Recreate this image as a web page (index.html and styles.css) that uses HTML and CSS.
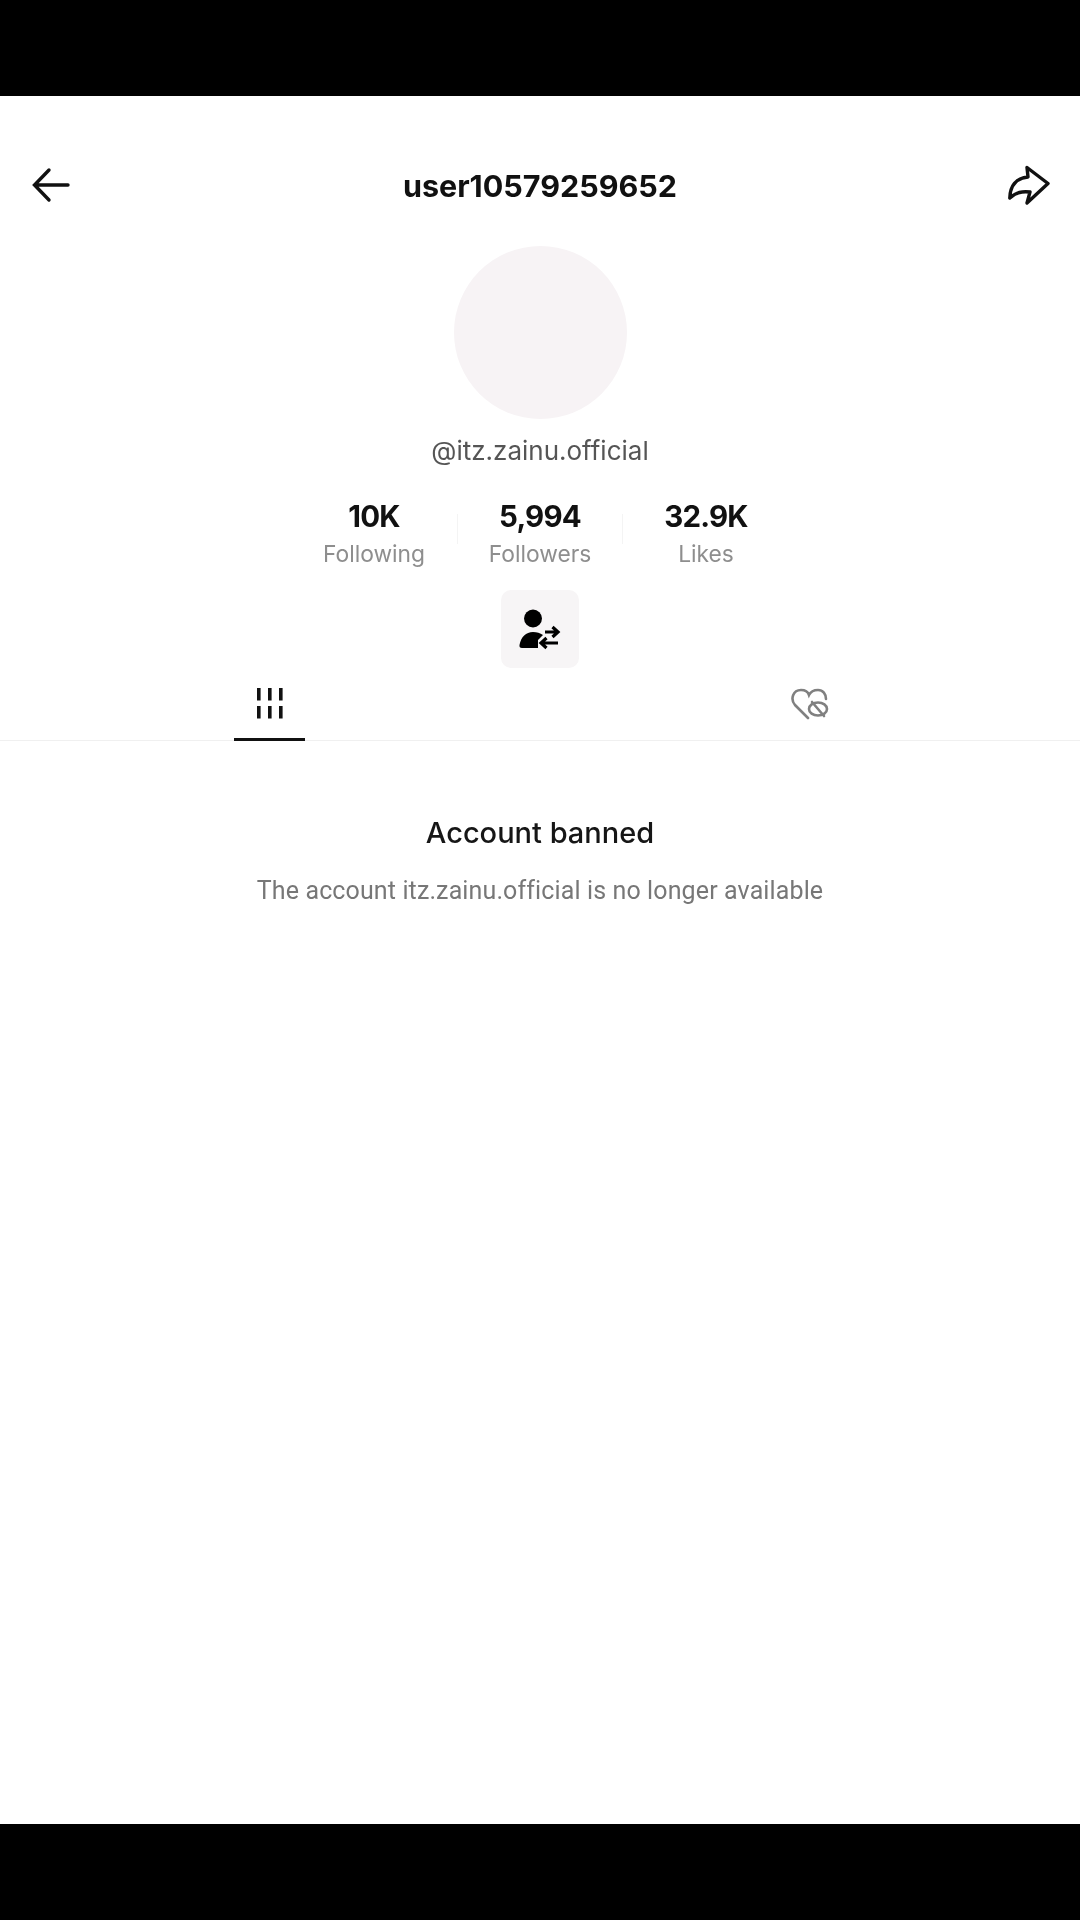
FILE: index.html
```html
<!DOCTYPE html>
<html lang="en">
<head>
<meta charset="utf-8">
<title>user10579259652</title>
<link rel="stylesheet" href="styles.css">
</head>
<body>
<div class="bar bar-top"></div>
<main class="screen">
  <header class="nav">
    <svg class="nav-icon" viewBox="0 0 44 44" fill="none" stroke="#111" stroke-width="3.4" stroke-linecap="round" stroke-linejoin="miter"><path d="M40 21H7M21 6 6.500 21 21 36"/></svg>
    <h1 class="title">user10579259652</h1>
    <svg class="nav-icon" viewBox="0 0 44 44" fill="none" stroke="#111" stroke-width="3.4" stroke-linejoin="round"><path d="M19 3.500 40 19.500 19 39 22 28C15 27 7 29 1.800 34 2 22 8 14 20 13Z"/></svg>
  </header>
  <div class="avatar"></div>
  <p class="handle">@itz.zainu.official</p>
  <section class="stats">
    <div class="stat"><strong class="num">10K</strong><span class="label">Following</span></div>
    <div class="stat stat-mid"><strong class="num">5,994</strong><span class="label">Followers</span></div>
    <div class="stat"><strong class="num">32.9K</strong><span class="label">Likes</span></div>
  </section>
  <div class="switch">
    <svg class="switch-icon" viewBox="0 0 42 42" fill="#000" stroke="none">
      <circle cx="14" cy="10.500" r="9"/>
      <path d="M3 40Q0 40 .5 37C2 29 7 24 14 24 18 24 21 25 24 27L19 32V40Z"/>
      <path d="M26 24H39M33.500 19 39 24 33.500 29M39 35H22M27.500 30 22 35 27.500 40" fill="none" stroke="#000" stroke-width="3.200"/>
    </svg>
  </div>
  <nav class="tabs">
    <div class="tab tab-active">
      <svg class="tab-grid" viewBox="0 0 30 32" fill="#111"><rect x="2" y="0" width="3.600" height="12.500"/><rect x="13" y="0" width="3.600" height="12.500"/><rect x="24" y="0" width="3.600" height="12.500"/><rect x="2" y="18" width="3.600" height="12.500"/><rect x="13" y="18" width="3.600" height="12.500"/><rect x="24" y="18" width="3.600" height="12.500"/></svg>
    </div>
    <div class="tab">
      <svg class="tab-heart" viewBox="0 0 38 32" fill="none" stroke="#808080" stroke-width="2.600" stroke-linecap="round"><path d="M17 30 4 17C-1 11 2 2 10 2 14 2 17 4 18 7 20 3 24 2 27 2 32 2 35 6 35 11"/><ellipse cx="27" cy="21" rx="9" ry="6.500"/><path d="M21 14 33 28"/></svg>
    </div>
  </nav>
  <section class="notice">
    <h2 class="notice-title">Account banned</h2>
    <p class="notice-text">The account itz.zainu.official is no longer available</p>
  </section>
</main>
<div class="bar bar-bottom"></div>
</body>
</html>
```
FILE: styles.css
```css
* { box-sizing: border-box; }
html, body { margin: 0; padding: 0; }
body {
  width: 1080px;
  height: 1920px;
  display: flex;
  flex-direction: column;
  background: #fff;
  font-family: "Inter", "Liberation Sans", sans-serif;
  overflow: hidden;
}
.bar { background: #000; flex: none; }
.bar-top { height: 96px; }
.bar-bottom { height: 96px; }
.screen {
  flex: 1;
  display: flex;
  flex-direction: column;
  align-items: center;
  background: #fff;
  filter: blur(0.7px);
}
.nav {
  width: 100%;
  height: 60px;
  margin-top: 60px;
  padding: 0 28px;
  display: flex;
  align-items: center;
  justify-content: space-between;
}
.nav-icon { width: 44px; height: 44px; }
.title {
  margin: 0 0 2px;
  font-size: 30.5px;
  font-weight: 700;
  color: #111;
}
.avatar {
  width: 173px;
  height: 173px;
  margin-top: 30px;
  border-radius: 50%;
  background: #f7f3f5;
}
.handle {
  margin: 16px 0 0;
  font-size: 26px;
  line-height: 32px;
  color: #555;
}
.stats {
  display: flex;
  margin-top: 31px;
}
.stat {
  width: 166px;
  display: flex;
  flex-direction: column;
  align-items: center;
  position: relative;
}
.stat-mid::before,
.stat-mid::after {
  content: "";
  position: absolute;
  top: 16px;
  height: 30px;
  width: 1px;
  background: #f4f4f4;
}
.stat-mid::before { left: 0; }
.stat-mid::after { right: 0; }
.num {
  font-size: 29.5px;
  line-height: 36px;
  font-weight: 700;
  letter-spacing: -0.8px;
  color: #111;
}
.label {
  margin-top: 5px;
  font-size: 22.8px;
  line-height: 30px;
  color: #8e8e8e;
}
.switch {
  width: 78px;
  height: 78px;
  margin-top: 21px;
  border-radius: 10px;
  background: #f7f5f6;
  display: flex;
  align-items: center;
  justify-content: center;
}
.switch-icon { width: 42px; height: 42px; }
.tabs {
  width: 100%;
  height: 73px;
  display: flex;
  border-bottom: 1px solid #f0f0f0;
}
.tab {
  flex: 1;
  display: flex;
  justify-content: center;
  padding-top: 20px;
  position: relative;
}
.tab-active::after {
  content: "";
  position: absolute;
  left: 234px;
  width: 71px;
  bottom: -1px;
  height: 3px;
  background: #111;
}
.tab-grid { width: 30px; height: 32px; }
.tab-heart { width: 38px; height: 32px; }
.notice {
  margin-top: 74px;
  display: flex;
  flex-direction: column;
  align-items: center;
}
.notice-title {
  margin: 0;
  font-size: 29px;
  line-height: 36px;
  font-weight: 500;
  color: #161616;
}
.notice-text {
  margin: 24px 0 0;
  font-family: "Roboto", "Liberation Sans", sans-serif;
  font-size: 25px;
  line-height: 32px;
  letter-spacing: 0.12px;
  color: #777;
}
```
